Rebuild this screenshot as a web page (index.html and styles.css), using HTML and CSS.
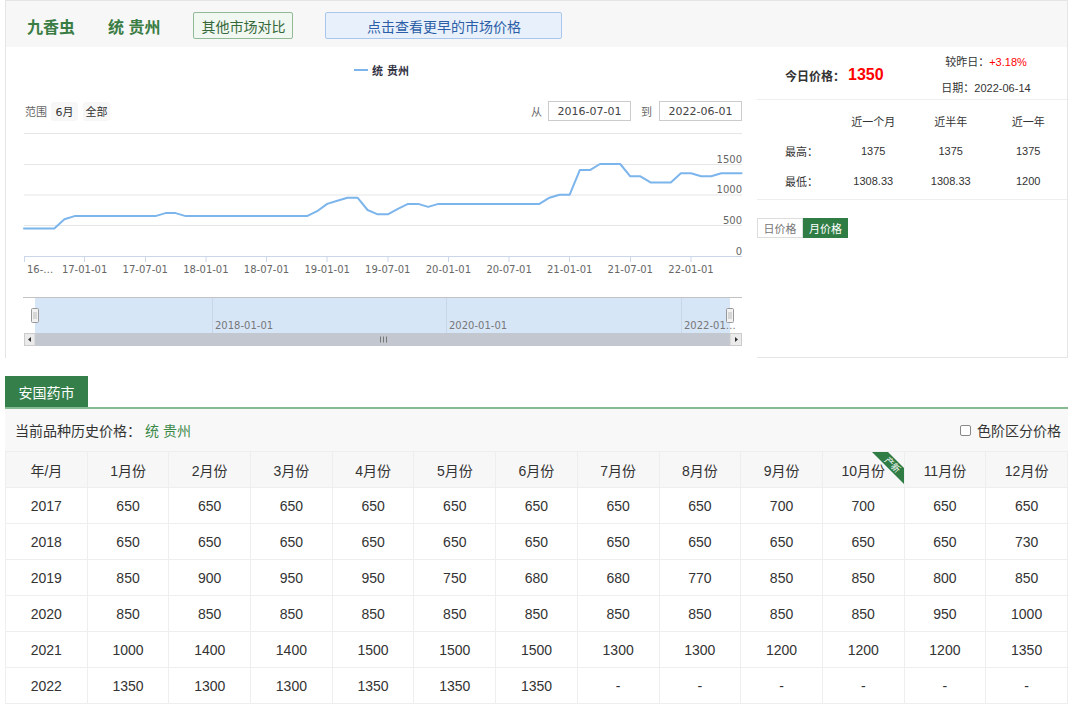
FILE: index.html
```html
<!DOCTYPE html>
<html lang="zh">
<head>
<meta charset="utf-8">
<title>九香虫 统 贵州</title>
<link rel="stylesheet" href="styles.css">
</head>
<body>
<div class="page">
  <section class="panel">
    <header class="panel-head">
      <span class="title">九香虫</span>
      <span class="title">统 贵州</span>
      <button class="btn-compare">其他市场对比</button>
      <button class="btn-earlier">点击查看更早的市场价格</button>
    </header>
    <div class="panel-body">
      <div class="chart-col">
        <div class="legend"><span class="legend-line"></span><span class="legend-text">统 贵州</span></div>
        <div class="controls">
          <div class="range">
            <span class="range-label">范围</span>
            <span class="range-btn">6月</span>
            <span class="range-btn">全部</span>
          </div>
          <div class="dates">
            <span class="date-label">从</span>
            <span class="date-input">2016-07-01</span>
            <span class="date-label to">到</span>
            <span class="date-input">2022-06-01</span>
          </div>
        </div>
        <svg class="plot" width="751" height="236" viewBox="0 0 751 236" xmlns="http://www.w3.org/2000/svg">
          <path d="M18 12.5H736M18 43.5H736M18 74H736M18 104.5H736" stroke="#e6e6e6" stroke-width="1" fill="none"/>
          <path d="M18 135.5H736" stroke="#ccd6eb" stroke-width="1"/>
          <path d="M18.5 135V141M78.5 135V141M139.5 135V141M200 135V141M260.5 135V141M321 135V141M382 135V141M442.5 135V141M503 135V141M563.5 135V141M624.5 135V141M685 135V141" stroke="#ccd6eb" stroke-width="1"/>
          <polyline fill="none" stroke="#7cb5ec" stroke-width="2" stroke-linejoin="round" stroke-linecap="round"
            points="18,107.4 48.3,107.4 58.4,98.2 68.5,95.1 149.4,95.1 159.5,92.1 169.6,92.1 179.7,95.1 301,95.1 311.1,90.2 321.2,82.9 331.3,79.8 341.4,76.7 351.5,76.7 361.6,89 371.7,93.3 381.8,93.3 391.9,87.8 402,82.9 412.1,82.9 422.2,85.9 432.3,82.9 533.4,82.9 543.5,76.7 553.6,73.7 563.7,73.7 573.8,49.1 583.9,49.1 594,43 614.2,43 624.3,55.3 634.4,55.3 644.5,61.4 664.8,61.4 674.9,52.2 685,52.2 695.1,55.3 705.2,55.3 715.3,52.2 735.5,52.2"/>
          <g class="axis-label">
            <text x="21" y="152">16-…</text>
            <text x="78.6" y="152" text-anchor="middle">17-01-01</text>
            <text x="139.3" y="152" text-anchor="middle">17-07-01</text>
            <text x="199.9" y="152" text-anchor="middle">18-01-01</text>
            <text x="260.5" y="152" text-anchor="middle">18-07-01</text>
            <text x="321.2" y="152" text-anchor="middle">19-01-01</text>
            <text x="381.8" y="152" text-anchor="middle">19-07-01</text>
            <text x="442.4" y="152" text-anchor="middle">20-01-01</text>
            <text x="503.1" y="152" text-anchor="middle">20-07-01</text>
            <text x="563.7" y="152" text-anchor="middle">21-01-01</text>
            <text x="624.3" y="152" text-anchor="middle">21-07-01</text>
            <text x="685" y="152" text-anchor="middle">22-01-01</text>
            <text x="736" y="41.5" text-anchor="end">1500</text>
            <text x="736" y="72" text-anchor="end">1000</text>
            <text x="736" y="102.8" text-anchor="end">500</text>
            <text x="736" y="133.5" text-anchor="end">0</text>
          </g>
          <rect x="18" y="177" width="718" height="35" fill="#ffffff"/>
          <rect x="29" y="177" width="695" height="35" fill="#d7e6f7"/>
          <path d="M206.5 177V212M440.5 177V212M675.5 177V212" stroke="#c8d6e8" stroke-width="1"/>
          <path d="M17 176.5H736" stroke="#c2c2c2" stroke-width="1"/>
          <g class="nav-label">
            <text x="209" y="207.5">2018-01-01</text>
            <text x="443" y="207.5">2020-01-01</text>
            <text x="678" y="207.5">2022-01…</text>
          </g>
          <rect x="25.5" y="187.5" width="7" height="14" rx="1" fill="#f2f2f2" stroke="#999"/>
          <path d="M28 191V198M30 191V198" stroke="#bbb" stroke-width="1"/>
          <rect x="720.5" y="187.5" width="7" height="14" rx="1" fill="#f2f2f2" stroke="#999"/>
          <path d="M723 191V198M725 191V198" stroke="#bbb" stroke-width="1"/>
          <rect x="18" y="212" width="718" height="13" fill="#f2f2f2"/>
          <rect x="29" y="212" width="695" height="13" fill="#c3c8d0"/>
          <path d="M374.5 215.5V221.5M377.5 215.5V221.5M380.5 215.5V221.5" stroke="#777" stroke-width="1"/>
          <rect x="18.5" y="212.5" width="10.5" height="12" fill="#ebebeb" stroke="#cccccc"/>
          <path d="M25 216L22 218.5L25 221Z" fill="#333"/>
          <rect x="724" y="212.5" width="11.5" height="12" fill="#ebebeb" stroke="#cccccc"/>
          <path d="M729 216L732 218.5L729 221Z" fill="#333"/>
        </svg>
      </div>
      <aside class="info-col">
        <div class="today">
          <div class="today-price">
            <span class="today-label">今日价格：</span><span class="today-value">1350</span>
          </div>
          <div class="today-meta">
            <span>较昨日：<span class="up">+3.18%</span></span>
            <span>日期：2022-06-14</span>
          </div>
        </div>
        <div class="stats">
          <table class="stats-table">
            <tr><th></th><th>近一个月</th><th>近半年</th><th>近一年</th></tr>
            <tr><td>最高：</td><td>1375</td><td>1375</td><td>1375</td></tr>
            <tr><td>最低：</td><td>1308.33</td><td>1308.33</td><td>1200</td></tr>
          </table>
        </div>
        <div class="switch">
          <span class="switch-btn">日价格</span>
          <span class="switch-btn active">月价格</span>
        </div>
      </aside>
    </div>
  </section>

  <section class="market">
    <div class="tabs"><span class="tab">安国药市</span></div>
    <div class="filter">
      <span>当前品种历史价格：</span><span class="filter-value">统 贵州</span>
      <label class="filter-check"><span class="checkbox"></span>色阶区分价格</label>
    </div>
    <table class="price-table">
      <thead>
        <tr>
          <th>年/月</th><th>1月份</th><th>2月份</th><th>3月份</th><th>4月份</th><th>5月份</th><th>6月份</th><th>7月份</th><th>8月份</th><th>9月份</th>
          <th class="badge-cell">10月份
            <svg class="badge" width="34" height="34" viewBox="0 0 34 34" xmlns="http://www.w3.org/2000/svg">
              <polygon points="2,0 18,0 34,16 34,32" fill="#2f7d45"/>
              <text x="22.5" y="13" transform="rotate(45 22.5 13)" text-anchor="middle" dominant-baseline="central" font-size="9" fill="#fff">产新</text>
            </svg>
          </th>
          <th>11月份</th><th>12月份</th>
        </tr>
      </thead>
      <tbody>
        <tr><td>2017</td><td>650</td><td>650</td><td>650</td><td>650</td><td>650</td><td>650</td><td>650</td><td>650</td><td>700</td><td>700</td><td>650</td><td>650</td></tr>
        <tr><td>2018</td><td>650</td><td>650</td><td>650</td><td>650</td><td>650</td><td>650</td><td>650</td><td>650</td><td>650</td><td>650</td><td>650</td><td>730</td></tr>
        <tr><td>2019</td><td>850</td><td>900</td><td>950</td><td>950</td><td>750</td><td>680</td><td>680</td><td>770</td><td>850</td><td>850</td><td>800</td><td>850</td></tr>
        <tr><td>2020</td><td>850</td><td>850</td><td>850</td><td>850</td><td>850</td><td>850</td><td>850</td><td>850</td><td>850</td><td>850</td><td>950</td><td>1000</td></tr>
        <tr><td>2021</td><td>1000</td><td>1400</td><td>1400</td><td>1500</td><td>1500</td><td>1500</td><td>1300</td><td>1300</td><td>1200</td><td>1200</td><td>1200</td><td>1350</td></tr>
        <tr><td>2022</td><td>1350</td><td>1300</td><td>1300</td><td>1350</td><td>1350</td><td>1350</td><td>-</td><td>-</td><td>-</td><td>-</td><td>-</td><td>-</td></tr>
      </tbody>
    </table>
  </section>
</div>
</body>
</html>
```
FILE: styles.css
```css
* { box-sizing: border-box; }

body {
  margin: 0;
  background: #ffffff;
  color: #333333;
  font-family: "Liberation Sans", "Noto Sans CJK SC", sans-serif;
}

.page {
  width: 1068px;
  padding-left: 5px;
}

/* ---------- top panel ---------- */
.panel {
  border: 1px solid #e5e5e5;
}

.panel-head {
  height: 46px;
  padding: 3px 0 0 21px;
  display: flex;
  align-items: center;
  background: #f7f7f7;
}

.title {
  font-size: 16px;
  font-weight: bold;
  color: #3a7d44;
  margin-right: 33px;
}

.btn-compare,
.btn-earlier {
  height: 27px;
  padding: 0;
  font-family: "Liberation Sans", "Noto Sans CJK SC", sans-serif;
  font-size: 14px;
  border-radius: 2px;
}

.btn-compare {
  width: 100px;
  margin-right: 32px;
  border: 1px solid #93ba97;
  background: #f1f7f1;
  color: #35683a;
}

.btn-earlier {
  width: 237px;
  border: 1px solid #a9c6ec;
  background: #e8f0fb;
  color: #2b5ea6;
}

.panel-body {
  display: flex;
  height: 310px;
}

.chart-col {
  width: 751px;
  height: 311px;
  flex: none;
  background: #ffffff;
  padding-top: 16px;
  font-family: "DejaVu Sans", "Noto Sans CJK SC", sans-serif;
}

.legend {
  height: 14px;
  display: flex;
  justify-content: center;
  align-items: center;
  gap: 4px;
}

.legend-line {
  width: 14px;
  height: 2px;
  background: #7cb5ec;
}

.legend-text {
  font-size: 11px;
  font-weight: bold;
  color: #333344;
}

.controls {
  margin-top: 24px;
  height: 20px;
  display: flex;
  justify-content: space-between;
  align-items: center;
  padding: 0 15px 0 19px;
}

.range,
.dates {
  display: flex;
  align-items: center;
}

.range-label {
  font-size: 11px;
  color: #666666;
  margin-right: 4px;
}

.range-btn {
  width: 27px;
  height: 19px;
  margin-right: 5px;
  border-radius: 3px;
  background: #f7f7f7;
  font-size: 11px;
  color: #333333;
  display: flex;
  align-items: center;
  justify-content: center;
}

.date-label {
  font-size: 11px;
  color: #666666;
  margin-right: 6px;
}

.date-label.to {
  margin-left: 10px;
  margin-right: 7px;
}

.date-input {
  width: 83px;
  height: 20px;
  border: 1px solid #cccccc;
  font-size: 11px;
  color: #444444;
  display: flex;
  align-items: center;
  justify-content: center;
}

.plot {
  display: block;
}

.axis-label text {
  font-size: 10px;
  fill: #666666;
}

.nav-label text {
  font-size: 10px;
  fill: #777777;
}

/* ---------- info column ---------- */
.info-col {
  width: 310px;
  flex: none;
  font-size: 11px;
}

.today {
  height: 53px;
  padding-top: 4px;
  border-bottom: 1px solid #eeeeee;
  display: flex;
  align-items: center;
}

.today-price {
  padding-left: 28px;
  display: flex;
  align-items: center;
}

.today-label {
  font-size: 12px;
  font-weight: bold;
  color: #333333;
}

.today-value {
  margin-left: 3px;
  font-size: 16px;
  font-weight: bold;
  color: #ff0000;
}

.today-meta {
  width: 100px;
  margin-left: auto;
  margin-right: 31px;
  display: flex;
  flex-direction: column;
  align-items: center;
  gap: 13px;
  font-size: 11px;
  line-height: 13px;
  color: #333333;
}

.up {
  color: #ff0000;
}

.stats {
  height: 100px;
  padding-top: 6px;
  border-bottom: 1px solid #eeeeee;
}

.stats-table {
  width: 100%;
  border-collapse: collapse;
  table-layout: fixed;
}

.stats-table th,
.stats-table td {
  height: 30px;
  padding: 0;
  text-align: center;
  font-size: 11px;
  font-weight: normal;
  color: #333333;
}

.stats-table td:first-child {
  text-align: left;
  padding-left: 28px;
}

.switch {
  margin-top: 18px;
  display: flex;
}

.switch-btn {
  width: 46px;
  height: 20px;
  border: 1px solid #dddddd;
  font-size: 11px;
  color: #777777;
  display: flex;
  align-items: center;
  justify-content: center;
}

.switch-btn.active {
  width: 45px;
  background: #2f7d45;
  border-color: #2f7d45;
  color: #ffffff;
}

/* ---------- market table ---------- */
.market {
  margin-top: 18px;
}

.tabs {
  display: flex;
  border-bottom: 2px solid #86ba91;
}

.tab {
  width: 83px;
  height: 31px;
  background: #35804a;
  color: #ffffff;
  font-size: 14px;
  display: flex;
  align-items: center;
  justify-content: center;
}

.filter {
  height: 42px;
  padding: 0 7px 0 10px;
  background: #f8f8f8;
  display: flex;
  align-items: center;
  font-size: 14px;
  color: #333333;
}

.filter-value {
  margin-left: 4px;
  color: #3b8a4a;
}

.filter-check {
  margin-left: auto;
  display: flex;
  align-items: center;
}

.checkbox {
  width: 11px;
  height: 11px;
  margin-right: 6px;
  border: 1px solid #888888;
  border-radius: 2px;
  background: #ffffff;
}

.price-table {
  width: 1063px;
  border-collapse: collapse;
  table-layout: fixed;
}

.price-table tr {
  height: 36px;
}

.price-table th,
.price-table td {
  padding: 0;
  border: 1px solid #eeeeee;
  text-align: center;
  font-size: 14px;
  font-weight: normal;
  color: #333333;
}

.price-table th {
  background: #f7f7f7;
}

.badge-cell {
  position: relative;
}

.badge {
  position: absolute;
  top: 0;
  right: 0;
  display: block;
}
```
